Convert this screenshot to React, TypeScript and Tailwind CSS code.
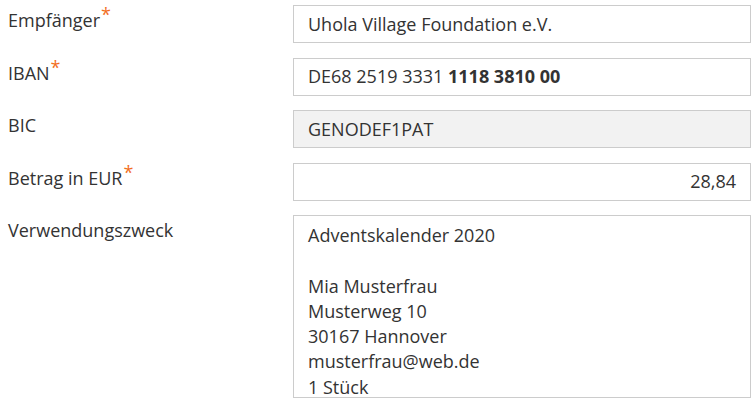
const font = { fontFamily: '"Open Sans", "Noto Sans", sans-serif' };

function Label({ text, required }: { text: string; required?: boolean }) {
  return (
    <div className="pl-2 pt-[2px] text-[18px] leading-[26px] text-[#333]">
      {text}
      {required && <span className="relative -top-[6px] ml-px text-[18px] text-[#f26f1f]">*</span>}
    </div>
  );
}

function Field({ children, muted, right }: { children: React.ReactNode; muted?: boolean; right?: boolean }) {
  return (
    <div
      className={`flex h-[38px] items-center border border-[#cccccc] px-[14px] text-[18px] text-[#333] ${
        muted ? "bg-[#f2f2f2]" : "bg-white"
      } ${right ? "justify-end" : ""}`}
    >
      {children}
    </div>
  );
}

export default function App() {
  const lines = ["Adventskalender 2020", "", "Mia Musterfrau", "Musterweg 10", "30167 Hannover", "musterfrau@web.de", "1 Stück"];
  return (
    <div className="min-h-[413px] w-[756px] bg-white pr-[5px] pt-[5px]" style={font}>
      <div className="grid grid-cols-[293px_1fr] gap-y-[14.5px]">
        <Label text="Empfänger" required />
        <Field>Uhola Village Foundation e.V.</Field>

        <Label text="IBAN" required />
        <Field>
          <span>
            DE68 2519 3331 <b className="font-bold">1118 3810 00</b>
          </span>
        </Field>

        <Label text="BIC" />
        <Field muted>GENODEF1PAT</Field>

        <Label text="Betrag in EUR" required />
        <Field right>28,84</Field>

        <Label text="Verwendungszweck" />
        <div className="h-[183px] border border-[#cccccc] px-[14px] pt-[7px] text-[18px] leading-[25.3px] text-[#333]">
          {lines.map((l, i) => (
            <div key={i} className="h-[25.3px]">
              {l}
            </div>
          ))}
        </div>
      </div>
    </div>
  );
}
